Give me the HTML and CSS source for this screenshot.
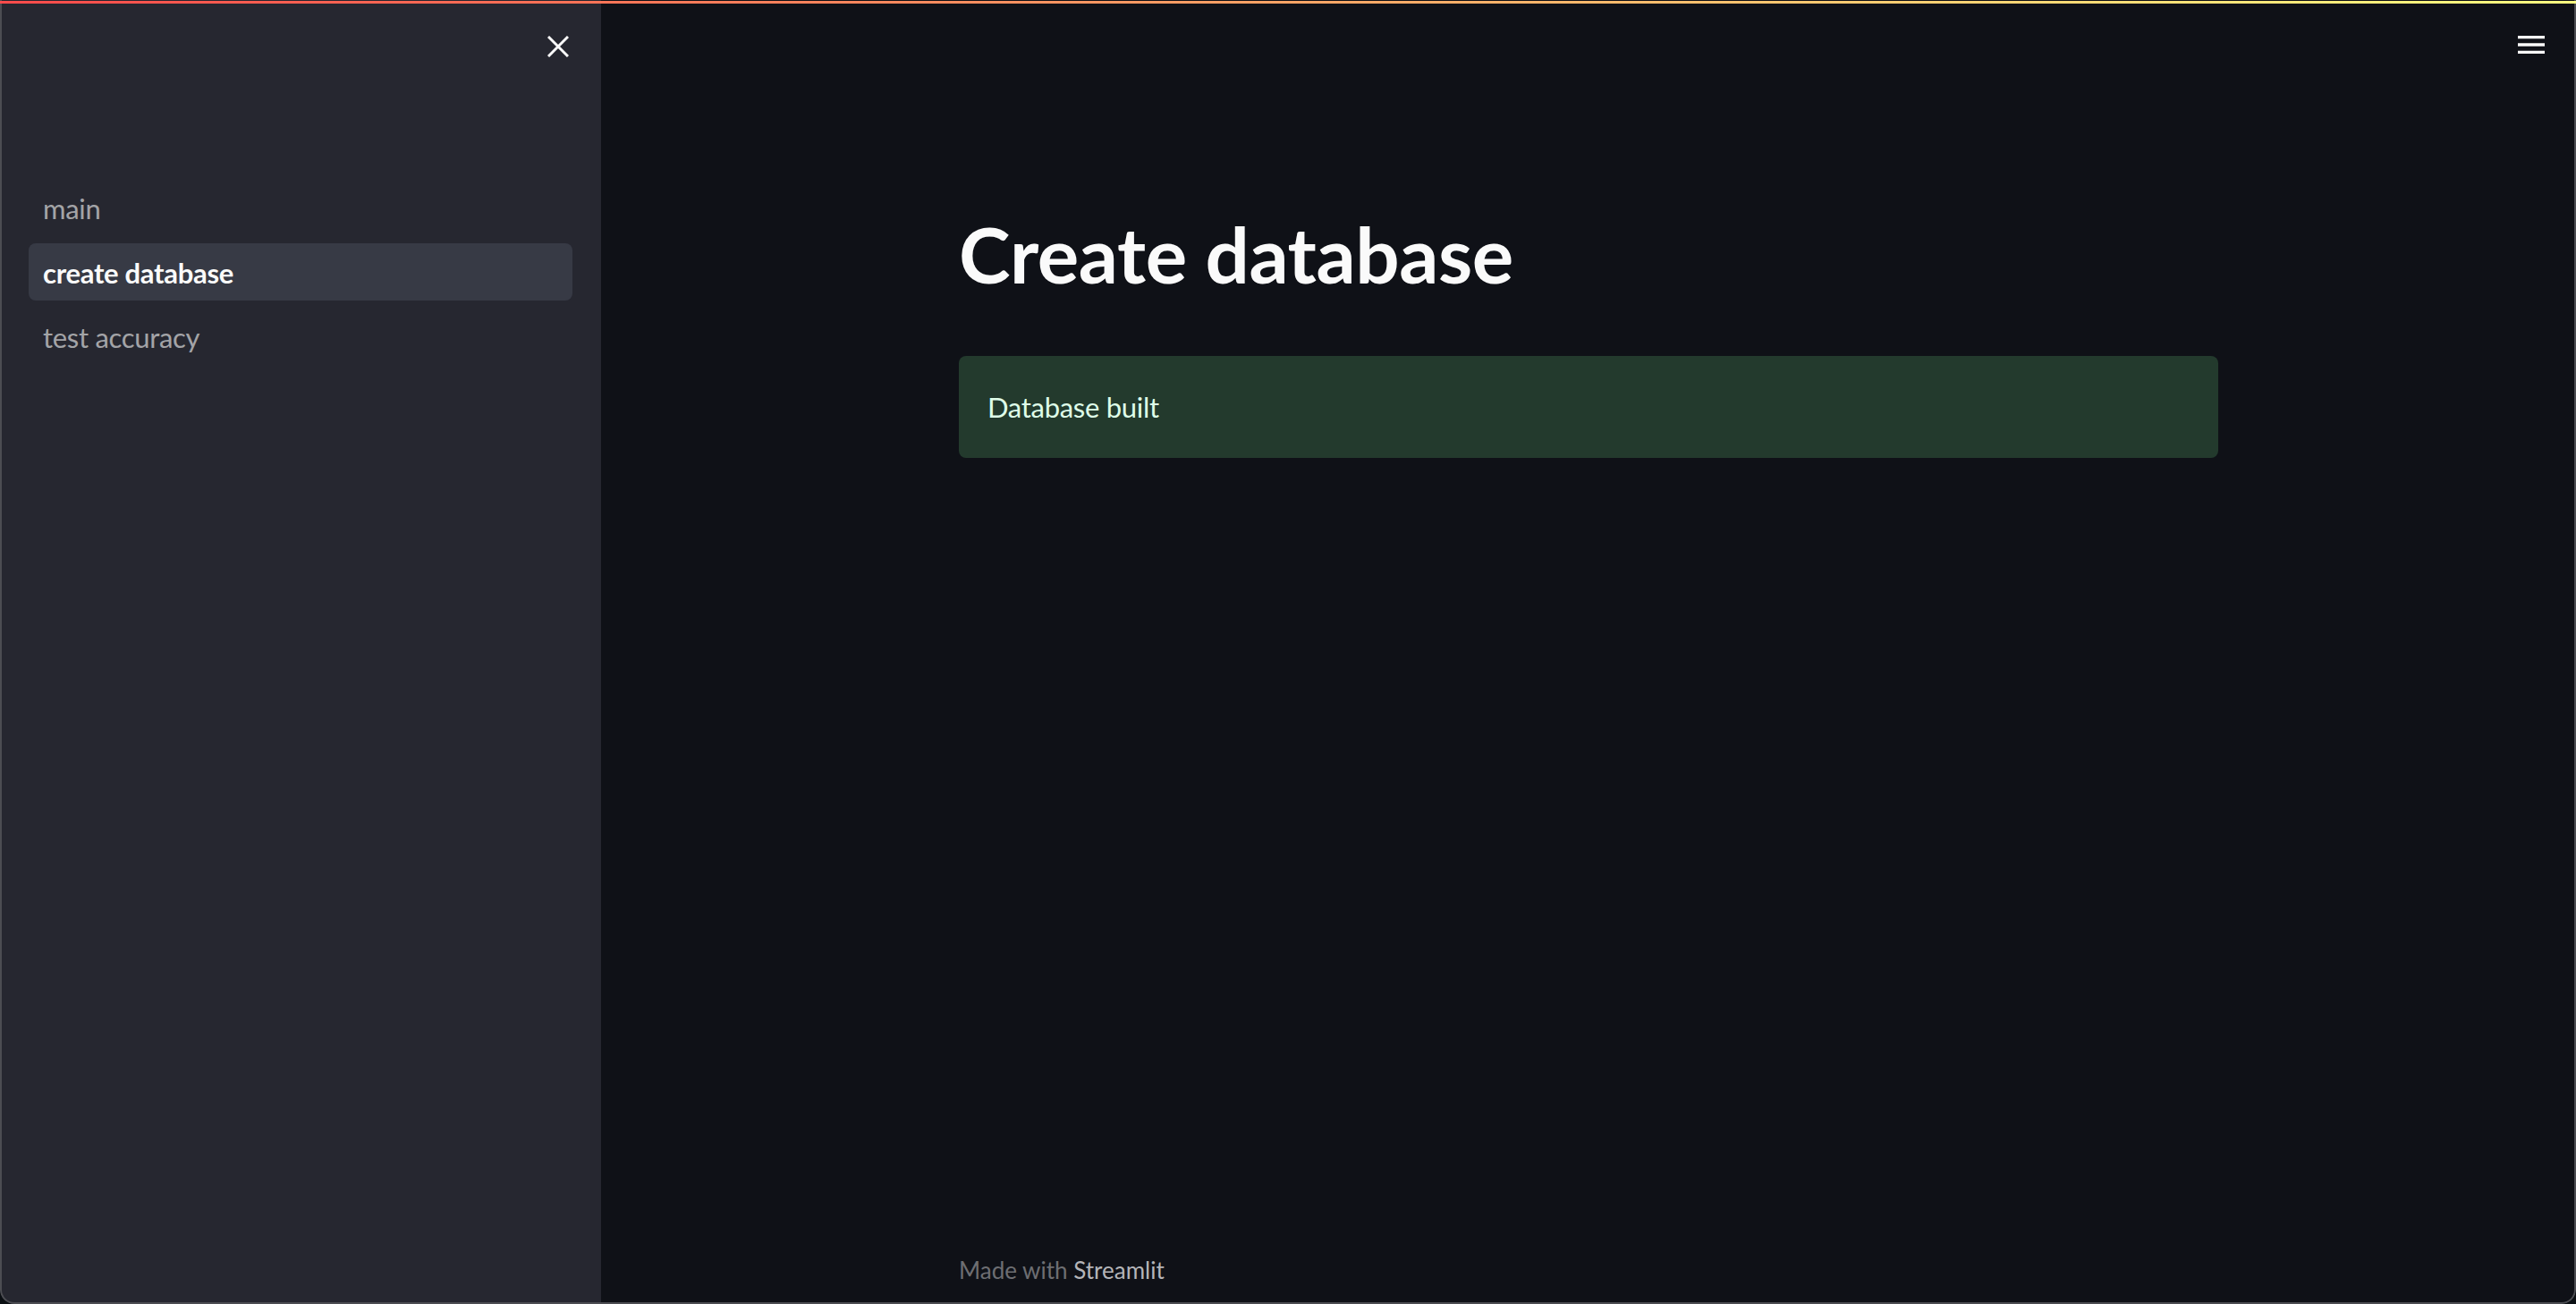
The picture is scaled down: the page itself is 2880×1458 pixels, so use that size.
FILE: index.html
```html
<!DOCTYPE html>
<html lang="en">
<head>
<meta charset="utf-8">
<title>create database · Streamlit</title>
<link rel="stylesheet" href="styles.css">
</head>
<body>
<div class="window">
  <div class="decoration"></div>
  <div class="app">
    <aside class="sidebar">
      <div class="sidebar-header">
        <button class="icon-btn close-btn" aria-label="Close sidebar">
          <svg width="24" height="24" viewBox="0 0 24 24"><path d="M1 1L23 23M23 1L1 23" stroke="#fafafa" stroke-width="3" fill="none"/></svg>
        </button>
      </div>
      <nav class="nav">
        <a class="nav-link">main</a>
        <a class="nav-link active">create database</a>
        <a class="nav-link">test accuracy</a>
      </nav>
    </aside>
    <main class="main">
      <header class="main-header">
        <button class="icon-btn menu-btn" aria-label="Main menu">
          <svg width="40" height="40" viewBox="0 0 24 24"><path d="M3 6h18v2H3zM3 11h18v2H3zM3 16h18v2H3z" fill="#fafafa"/></svg>
        </button>
      </header>
      <section class="block">
        <h1 class="title">Create database</h1>
        <div class="alert-success">Database built</div>
      </section>
      <footer class="footer">
        <span class="footer-dim">Made with</span> <span class="footer-link">Streamlit</span>
      </footer>
    </main>
  </div>
</div>
</body>
</html>
```

FILE: styles.css
```css
html, body {
  margin: 0;
  padding: 0;
  background: #0b0f13;
}

body {
  width: 2880px;
  height: 1458px;
  overflow: hidden;
  font-family: Lato, "Open Sans", sans-serif;
}

.window {
  position: relative;
  width: 2880px;
  height: 1458px;
  border-radius: 0 0 16px 16px;
  overflow: hidden;
  background: #0f1117;
}

.window::after {
  content: "";
  position: absolute;
  inset: 0;
  border: 2px solid #4c4d52;
  border-top: none;
  border-radius: 0 0 16px 16px;
  pointer-events: none;
}

.decoration {
  position: absolute;
  top: 1px;
  left: 0;
  right: 0;
  height: 3px;
  background: linear-gradient(90deg, #ff4b4b, #fffd80);
  z-index: 2;
}

.app {
  display: flex;
  height: 100%;
}

.sidebar {
  width: 672px;
  flex: none;
  box-sizing: border-box;
  padding: 0 32px;
  background: #262730;
}

.sidebar-header {
  height: 104px;
  display: flex;
  justify-content: flex-end;
  align-items: center;
}

.icon-btn {
  border: none;
  background: none;
  padding: 0;
  display: flex;
  cursor: pointer;
}

.close-btn {
  margin-right: 4px;
}

.nav {
  display: flex;
  flex-direction: column;
  padding-top: 92px;
}

.nav-link {
  display: block;
  height: 64px;
  line-height: 66px;
  margin: 4px 0;
  padding: 0 16px;
  border-radius: 8px;
  font-size: 31px;
  letter-spacing: -0.3px;
  color: rgba(250, 250, 250, 0.6);
}

.nav-link.active {
  background: rgba(151, 166, 195, 0.15);
  color: #fafafa;
  font-weight: 700;
}

.main {
  flex: 1;
  display: flex;
  flex-direction: column;
  min-width: 0;
}

.main-header {
  height: 100px;
  display: flex;
  justify-content: flex-end;
  align-items: center;
  padding-right: 30px;
}

.block {
  flex: 1;
  width: 100%;
  max-width: 1472px;
  box-sizing: border-box;
  margin: 0 auto;
  padding: 92px 32px 0;
}

.title {
  margin: 0;
  padding: 40px 0 30px;
  font-size: 87px;
  font-weight: 700;
  line-height: 1.2;
  letter-spacing: -0.4px;
  color: #fafafa;
}

.alert-success {
  margin-top: 32px;
  padding: 33px 32px;
  border-radius: 8px;
  background: #233a2d;
  color: #dffde9;
  font-size: 31px;
  line-height: 48px;
  letter-spacing: -0.3px;
}

.footer {
  width: 100%;
  max-width: 1472px;
  box-sizing: border-box;
  margin: 0 auto;
  padding: 0 32px 18px;
  font-size: 26px;
  line-height: 40px;
}

.footer-dim {
  color: #6d6e72;
}

.footer-link {
  color: #b4b5b9;
}
```
